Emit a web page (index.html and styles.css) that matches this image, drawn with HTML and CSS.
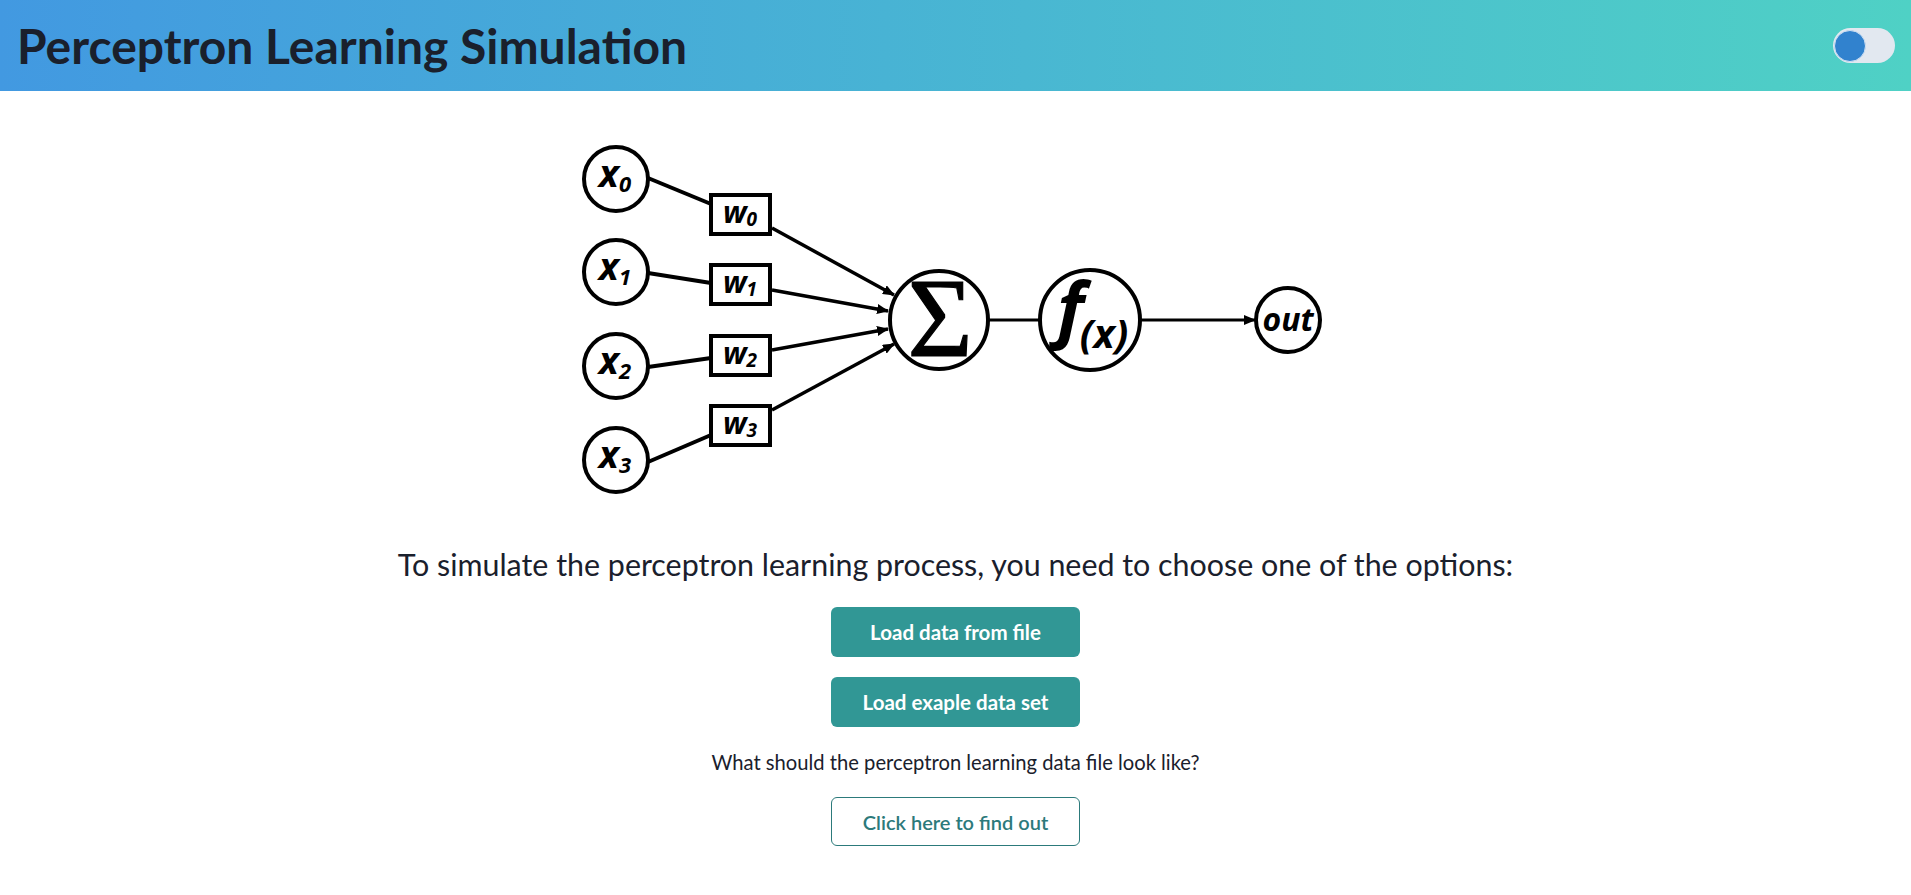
FILE: index.html
```html
<!DOCTYPE html>
<html lang="en">
<head>
<meta charset="utf-8">
<title>Perceptron Learning Simulation</title>
<link rel="stylesheet" href="styles.css">
</head>
<body>
<header class="topbar">
  <h1 class="title">Perceptron Learning Simulation</h1>
  <div class="toggle"><span class="knob"></span></div>
</header>
<main class="content">
  <svg class="diagram" width="761" height="380" viewBox="0 0 761 380" xmlns="http://www.w3.org/2000/svg">
    <defs>
      <marker id="arr" markerUnits="userSpaceOnUse" markerWidth="12" markerHeight="10" refX="11" refY="5" orient="auto">
        <path d="M0,0 L12,5 L0,10 Z" fill="#000"/>
      </marker>
    </defs>
    <g fill="none" stroke="#000" stroke-width="4">
      <circle cx="41" cy="49" r="32" fill="#fff"/>
      <circle cx="41" cy="142" r="32" fill="#fff"/>
      <circle cx="41" cy="236" r="32" fill="#fff"/>
      <circle cx="41" cy="330" r="32" fill="#fff"/>
      <rect x="136" y="65" width="59" height="39"/>
      <rect x="136" y="135" width="59" height="39"/>
      <rect x="136" y="206" width="59" height="39"/>
      <rect x="136" y="276" width="59" height="39"/>
      <line x1="73" y1="48" x2="136" y2="74"/>
      <line x1="73" y1="143" x2="136" y2="153"/>
      <line x1="73" y1="237" x2="136" y2="228"/>
      <line x1="73" y1="332" x2="136" y2="305"/>
      <line x1="197" y1="98" x2="319" y2="165" stroke-width="3.5" marker-end="url(#arr)"/>
      <line x1="197" y1="160" x2="313" y2="181" stroke-width="3.5" marker-end="url(#arr)"/>
      <line x1="197" y1="220" x2="313" y2="199" stroke-width="3.5" marker-end="url(#arr)"/>
      <line x1="197" y1="280" x2="319" y2="214" stroke-width="3.5" marker-end="url(#arr)"/>
      <circle cx="364" cy="190" r="49"/>
      <line x1="413" y1="190" x2="465" y2="190" stroke-width="3"/>
      <circle cx="515" cy="190" r="50"/>
      <line x1="565" y1="190" x2="680" y2="190" stroke-width="3" marker-end="url(#arr)"/>
      <circle cx="713" cy="190" r="32"/>
    </g>
    <g class="lbl">
      <text x="40" y="57" text-anchor="middle">x<tspan class="sub" dy="5">0</tspan></text>
      <text x="40" y="150" text-anchor="middle">x<tspan class="sub" dy="5">1</tspan></text>
      <text x="40" y="244" text-anchor="middle">x<tspan class="sub" dy="5">2</tspan></text>
      <text x="40" y="338" text-anchor="middle">x<tspan class="sub" dy="5">3</tspan></text>
      <text class="w" x="165" y="93" text-anchor="middle">w<tspan class="wsub" dy="3">0</tspan></text>
      <text class="w" x="165" y="163" text-anchor="middle">w<tspan class="wsub" dy="3">1</tspan></text>
      <text class="w" x="165" y="234" text-anchor="middle">w<tspan class="wsub" dy="3">2</tspan></text>
      <text class="w" x="165" y="304" text-anchor="middle">w<tspan class="wsub" dy="3">3</tspan></text>
      <text class="sigma" x="365" y="226" text-anchor="middle">Σ</text>
      <text class="fx" x="482" y="204">f<tspan class="fxsub" dx="-4" dy="14">(x)</tspan></text>
      <text class="out" x="713" y="201" text-anchor="middle">out</text>
    </g>
  </svg>
  <p class="lead">To simulate the perceptron learning process, you need to choose one of the options:</p>
  <button class="btn btn-solid btn-first">Load data from file</button>
  <button class="btn btn-solid btn-second">Load exaple data set</button>
  <p class="hint">What should the perceptron learning data file look like?</p>
  <button class="btn btn-outline">Click here to find out</button>
</main>
</body>
</html>
```
FILE: styles.css
```css
* { box-sizing: border-box; }
html, body { margin: 0; padding: 0; background: #fff; }
body { font-family: "Lato", "Open Sans", sans-serif; color: #1a202c; }

.topbar {
  height: 91px;
  display: flex;
  align-items: center;
  justify-content: space-between;
  padding: 0 16px 0 17px;
  background: linear-gradient(to right, #4299e1, #4fd1c5);
}
.title {
  margin: 0;
  font-size: 48px;
  font-weight: 700;
  line-height: 1.2;
  color: #1a202c;
}
.toggle {
  width: 62px;
  height: 35px;
  border-radius: 18px;
  background: #e2e8f0;
  display: flex;
  align-items: center;
  padding-left: 1px;
}
.knob {
  width: 32px;
  height: 32px;
  border-radius: 50%;
  background: #3182ce;
  border: 1px solid #cfe0f3;
}

.content {
  display: flex;
  flex-direction: column;
  align-items: center;
}
.diagram { display: block; margin-top: 39px; }
.lbl text {
  font-family: "Open Sans", "DejaVu Sans", sans-serif;
  font-weight: 700;
  font-style: italic;
  font-size: 38px;
  fill: #000;
}
.lbl .sub { font-size: 22px; }
.lbl .w { font-size: 30px; }
.lbl .wsub { font-size: 19px; }
.lbl .sigma {
  font-family: "Liberation Serif", serif;
  font-style: normal;
  font-weight: 400;
  font-size: 112px;
  stroke: #000;
  stroke-width: 1.2px;
}
.lbl .fx { font-size: 72px; }
.lbl .fxsub { font-size: 40px; }
.lbl .out { font-size: 32px; }

.lead {
  margin: 36px 0 0;
  font-size: 30.4px;
  line-height: 36px;
}
.btn {
  width: 249px;
  height: 50px;
  border-radius: 6px;
  font-family: "Lato", "Open Sans", sans-serif;
  font-size: 20.5px;
  font-weight: 700;
  cursor: pointer;
}
.btn-solid {
  background: #319795;
  color: #fff;
  border: none;
}
.btn-first { margin-top: 25px; }
.btn-second { margin-top: 20px; }
.hint {
  margin: 23px 0 0;
  font-size: 20.2px;
  line-height: 24px;
}
.btn-outline {
  margin-top: 23px;
  height: 49px;
  background: #fff;
  color: #2c7a7b;
  border: 1px solid #2c7a7b;
  font-size: 20px;
  font-weight: 600;
}
```
